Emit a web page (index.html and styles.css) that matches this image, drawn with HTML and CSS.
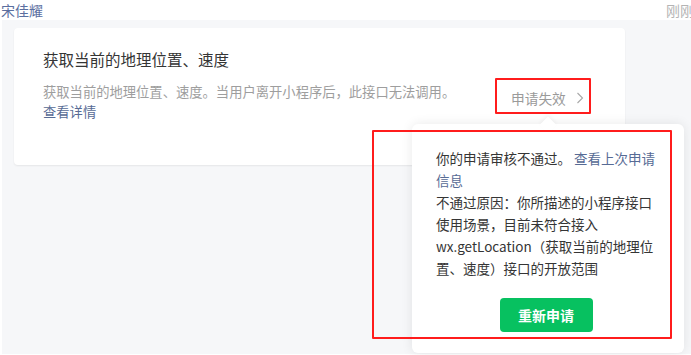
FILE: index.html
```html
<!DOCTYPE html>
<html lang="zh-CN">
<head>
<meta charset="utf-8">
<title>接口权限</title>
<link rel="stylesheet" href="styles.css">
</head>
<body>
  <div class="header">
    <span class="name">宋佳耀</span>
    <span class="time">刚刚</span>
  </div>
  <div class="panel">
    <div class="card">
      <div class="info">
        <div class="title">获取当前的地理位置、速度</div>
        <div class="desc">获取当前的地理位置、速度。当用户离开小程序后，此接口无法调用。<br><a class="link">查看详情</a></div>
      </div>
      <div class="status">
        <span>申请失效</span>
        <svg class="chev" width="8" height="12" viewBox="0 0 8 12"><path d="M1.5 1 L6.5 6 L1.5 11" fill="none" stroke="#a8a8a8" stroke-width="1.1"/></svg>
      </div>
    </div>

    <div class="popover">
      <div class="arrow"></div>
      <div class="pop-text">你的申请审核不通过。 <a class="link">查看上次申请信息</a><br>不通过原因：你所描述的小程序接口使用场景，目前未符合接入wx.getLocation（获取当前的地理位置、速度）接口的开放范围</div>
      <div class="pop-actions"><button class="btn">重新申请</button></div>
    </div>

    <div class="mark mark-status"></div>
    <div class="mark mark-pop"></div>
  </div>
</body>
</html>
```

FILE: styles.css
```css
* { box-sizing: border-box; }
html, body { margin: 0; padding: 0; }
body {
  width: 691px;
  height: 355px;
  overflow: hidden;
  background: #ffffff;
  font-family: "Noto Sans CJK SC", "Noto Sans", sans-serif;
  color: #353535;
}
.header {
  height: 20px;
  display: flex;
  justify-content: space-between;
  align-items: center;
  padding-left: 1px;
  font-size: 14px;
  line-height: 20px;
  margin-right: -3px;
}
.name { color: #5b6f9f; }
.time { color: #b4b4b4; }
.panel {
  position: relative;
  margin-left: 2px;
  height: 334px;
  background: #f6f7f9;
  padding: 8px 0 0 12px;
}
.card {
  width: 611px;
  height: 137px;
  background: #ffffff;
  border-radius: 4px;
  box-shadow: 0 1px 2px rgba(0, 0, 0, 0.07);
  padding: 20px 0 0 29px;
  display: flex;
  align-items: flex-start;
}
.info { width: 468px; flex: none; }
.title {
  font-size: 15.5px;
  line-height: 22px;
  color: #353535;
}
.desc {
  margin-top: 12px;
  font-size: 13.3px;
  line-height: 20px;
  color: #9e9e9e;
}
.link { color: #576b95; cursor: pointer; }
.status {
  margin-top: 40px;
  display: flex;
  align-items: center;
  gap: 10px;
  font-size: 13.7px;
  line-height: 20px;
  color: #9a9a9a;
}
.chev { display: block; }
.popover {
  position: absolute;
  left: 410px;
  top: 104px;
  width: 272px;
  height: 229px;
  background: #ffffff;
  border-radius: 6px;
  box-shadow: 0 0 12px rgba(0, 0, 0, 0.09);
  padding: 23px 26px 0 24px;
}
.arrow {
  position: absolute;
  left: 130px;
  top: -5px;
  width: 12px;
  height: 12px;
  background: #ffffff;
  transform: rotate(45deg);
  box-shadow: -2px -2px 4px rgba(0, 0, 0, 0.04);
}
.pop-text {
  position: relative;
  font-size: 13.5px;
  line-height: 22px;
  color: #353535;
}
.pop-actions {
  display: flex;
  justify-content: center;
  margin-top: 19px;
  margin-left: -2px;
}
.btn {
  width: 93px;
  height: 34px;
  border: 0;
  border-radius: 4px;
  background: #07c160;
  color: #ffffff;
  font-family: inherit;
  font-size: 14px;
  font-weight: bold;
}
.mark {
  position: absolute;
  border: 2px solid #ff1c1c;
  border-radius: 1px;
}
.mark-status { left: 493px; top: 58px; width: 96px; height: 36px; }
.mark-pop { left: 370px; top: 110px; width: 300px; height: 209px; }
```
